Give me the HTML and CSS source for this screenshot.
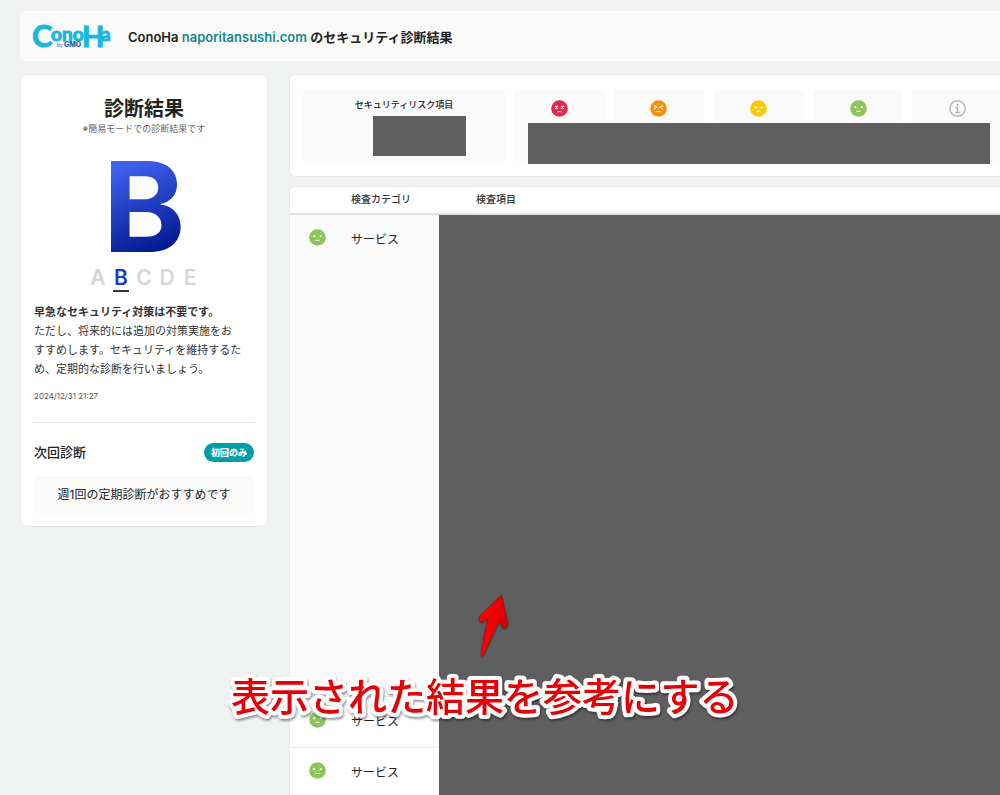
FILE: index.html
```html
<!DOCTYPE html>
<html lang="ja">
<head>
<meta charset="utf-8">
<meta name="viewport" content="width=device-width, initial-scale=1">
<title>ConoHa セキュリティ診断結果</title>
<link rel="stylesheet" href="styles.css">
</head>
<body>
<svg class="sprite" aria-hidden="true">
  <symbol id="face-good" viewBox="0 0 17 17">
    <circle cx="8.500" cy="8.500" r="8.300" fill="#8cc55a"/>
    <circle cx="5.300" cy="7.200" r="1.100" fill="#fff"/><circle cx="11.700" cy="7.200" r="1.100" fill="#fff"/>
    <path d="M6.500 11q2 1 4 0" fill="none" stroke="#fff" stroke-width="1.100"/>
  </symbol>
  <symbol id="face-mid" viewBox="0 0 17 17">
    <circle cx="8.500" cy="8.500" r="8.300" fill="#ffc800"/>
    <path d="M4 7.500h3.500M9.500 7.500H13M6.500 11.500h4" fill="none" stroke="#fff" stroke-width="1.300"/>
  </symbol>
  <symbol id="face-warn" viewBox="0 0 17 17">
    <circle cx="8.500" cy="8.500" r="8.300" fill="#ff8c0a"/>
    <path d="M4 5.500l3 1.800-3 1.800M13 5.500l-3 1.800 3 1.800M6.500 12q2-1.400 4 0" fill="none" stroke="#fff" stroke-width="1.200"/>
  </symbol>
  <symbol id="face-bad" viewBox="0 0 17 17">
    <circle cx="8.500" cy="8.500" r="8.300" fill="#e6264f"/>
    <path d="M4 5.800l3 3m0-3l-3 3M10 5.800l3 3m0-3l-3 3M6.500 12.300q2-1.600 4 0" fill="none" stroke="#fff" stroke-width="1.200"/>
  </symbol>
  <symbol id="info" viewBox="0 0 17 17">
    <circle cx="8.500" cy="8.500" r="7.700" fill="none" stroke="#b0b0b0" stroke-width="1.300"/>
    <circle cx="8.500" cy="4.800" r="1.100" fill="#b0b0b0"/>
    <path d="M6.500 7.500h2v5M6.200 12.500h4.600" fill="none" stroke="#b0b0b0" stroke-width="1.300"/>
  </symbol>
</svg>
<div class="page">
  <header class="topbar">
    <svg class="logo" viewBox="0 0 80 26" role="img" aria-label="ConoHa by GMO">
      <g class="logo-name">
        <text class="logo-tall" x="-1" y="23">C</text>
        <text class="logo-low" x="18" y="17">ono</text>
        <text class="logo-h" x="49" y="23">H</text>
        <text class="logo-low" x="68" y="17">a</text>
      </g>
      <text class="logo-by" x="24" y="23">by</text>
      <text class="logo-gmo" x="31" y="23">GMO</text>
    </svg>
    <h1 class="topbar-title">ConoHa <span class="domain">naporitansushi.com</span> のセキュリティ診断結果</h1>
  </header>
  <div class="columns">
    <aside class="card result">
      <h2 class="result-title">診断結果</h2>
      <p class="result-note">※簡易モードでの診断結果です</p>
      <div class="grade">B</div>
      <div class="scale"><span>A</span><span class="current">B</span><span>C</span><span>D</span><span>E</span></div>
      <p class="advice"><strong>早急なセキュリティ対策は不要です。</strong><br>ただし、将来的には追加の対策実施をお<br>すすめします。セキュリティを維持するた<br>め、定期的な診断を行いましょう。</p>
      <time class="date">2024/12/31 21:27</time>
      <section class="next">
        <div class="next-head"><h3 class="next-title">次回診断</h3><span class="pill">初回のみ</span></div>
        <p class="next-note">週1回の定期診断がおすすめです</p>
      </section>
    </aside>
    <main class="main">
      <section class="card summary">
        <div class="tile total"><h2 class="tile-title">セキュリティリスク項目</h2><div class="mask-total"></div></div>
        <div class="tile"><svg class="icon"><use href="#face-bad"/></svg></div>
        <div class="tile"><svg class="icon"><use href="#face-warn"/></svg></div>
        <div class="tile"><svg class="icon"><use href="#face-mid"/></svg></div>
        <div class="tile"><svg class="icon"><use href="#face-good"/></svg></div>
        <div class="tile"><svg class="icon"><use href="#info"/></svg></div>
        <div class="mask-counts"></div>
      </section>
      <section class="card list">
        <table class="checks">
          <colgroup><col class="col-icon"><col class="col-category"><col></colgroup>
          <thead><tr><th></th><th>検査カテゴリ</th><th>検査項目</th></tr></thead>
          <tbody>
            <tr class="row-open"><td class="cell-icon"><svg class="icon"><use href="#face-good"/></svg></td><td>サービス</td><td></td></tr>
            <tr><td class="cell-icon"><svg class="icon"><use href="#face-good"/></svg></td><td>サービス</td><td></td></tr>
            <tr><td class="cell-icon"><svg class="icon"><use href="#face-good"/></svg></td><td>サービス</td><td></td></tr>
          </tbody>
        </table>
        <div class="mask-items"></div>
      </section>
    </main>
  </div>
</div>
<svg class="arrow" viewBox="0 0 36 68" aria-hidden="true">
  <defs><linearGradient id="red" x1="0" y1="0.300" x2="1" y2="0.500"><stop offset="0.300" stop-color="#fb0006"/><stop offset="1" stop-color="#d00004"/></linearGradient></defs>
  <path d="M26.500 2L33 31Q33 35 29 35Q27 35 25 28L24.500 28Q16 45 8.500 62Q7 65 6 62Q8 45 13.500 25L8 29Q5 30 4 26Q3.500 23 8 20Z" fill="url(#red)" stroke="#a50005" stroke-width="0.500" stroke-linejoin="round"/>
</svg>
<svg class="caption" viewBox="0 0 520 60"><text x="6" y="43">表示された結果を参考にする</text></svg>
</body>
</html>
```
FILE: styles.css
```css
* { box-sizing: border-box; }
html, body { height: 100%; }
body {
  margin: 0;
  position: relative;
  overflow: hidden;
  background: #f0f2f1;
  color: #222;
  font-family: Inter, "Noto Sans CJK JP", sans-serif;
  font-size: 12px;
}
h1, h2, h3, p { margin: 0; }
.sprite { position: absolute; width: 0; height: 0; }
.page {
  height: 100%;
  margin-right: -17px;
  padding: 11px 0 0 20px;
  display: flex;
  flex-direction: column;
  gap: 13px;
}
.topbar {
  flex: none;
  display: flex;
  align-items: center;
  gap: 15px;
  height: 50px;
  padding: 2px 13px 0;
  background: #fafafa;
  border-radius: 4px;
}
.logo { width: 80px; height: 26px; overflow: visible; }
.logo-name { fill: #17b8db; stroke: #17b8db; stroke-width: 1; font-family: Lato, sans-serif; font-weight: 700; }
.logo-tall { font-size: 31px; }
.logo-h { font-size: 29px; }
.logo-low { font-size: 19px; }
.logo-by { fill: #1d5fae; font-size: 5px; }
.logo-gmo { fill: #1d5fae; font-size: 7px; font-weight: 800; }
.topbar-title { font-size: 13px; font-weight: 600; line-height: 20px; }
.domain { color: #13898a; }

.columns { flex: 1; min-height: 0; display: flex; align-items: flex-start; gap: 21px; }
.card { background: #fff; border: 1px solid #e6e9e8; border-radius: 6px; }
.result { flex: none; width: 248px; padding: 20px 13px 13px; }
.result-title { font-size: 20px; font-weight: 700; line-height: 29px; text-align: center; }
.result-note { font-size: 9px; line-height: 10px; text-align: center; color: #666; }
.grade {
  width: fit-content;
  margin: 18px auto 0;
  font-size: 125px;
  font-weight: 700;
  line-height: 110px;
  background: linear-gradient(160deg, #4060ee 15%, #001a90 85%);
  -webkit-background-clip: text;
  background-clip: text;
  color: transparent;
}
.scale {
  display: flex;
  justify-content: center;
  gap: 7px;
  margin-top: 4px;
  font-size: 21px;
  font-weight: 600;
  line-height: 24px;
  color: #d3d7d6;
}
.scale span { width: 16px; text-align: center; }
.scale .current { color: #1d3cc4; border-bottom: 2px solid #333; }
.advice { margin-top: 11px; font-size: 11px; line-height: 19px; color: #333; }
.advice strong { font-weight: 700; }
.date { display: block; margin-top: 11px; font-size: 8px; line-height: 12px; color: #555; }
.next { margin-top: 20px; padding-top: 20px; border-top: 1px solid #e3e6e5; }
.next-head { display: flex; align-items: center; justify-content: space-between; }
.next-title { font-size: 13px; font-weight: 500; line-height: 19px; }
.pill { padding: 0 7px; border-radius: 10px; background: #009fa5; color: #fff; font-size: 9px; font-weight: 800; line-height: 19px; }
.next-note { margin-top: 14px; background: #fafafa; border-radius: 3px; line-height: 37px; text-align: center; }

.main { flex: 1; min-width: 0; align-self: stretch; display: flex; flex-direction: column; gap: 9px; }
.summary {
  position: relative;
  flex: none;
  display: grid;
  grid-template-columns: 203fr repeat(5, 91fr);
  gap: 9px;
  padding: 14px 13px;
}
.tile { height: 73px; padding-top: 11px; background: #fafafa; border-radius: 5px; text-align: center; }
.tile-title { font-size: 9px; font-weight: 500; line-height: 9px; }
.icon { display: block; width: 17px; height: 17px; }
.tile .icon { margin: 0 auto; }
.total { position: relative; }
.mask-total { position: absolute; top: 27px; left: 70px; right: 39px; height: 40px; background: #5f5f5f; }
.mask-counts { position: absolute; top: 48px; left: 238px; right: 26px; height: 41px; background: #5f5f5f; }
.list { position: relative; flex: 1; min-height: 0; overflow: hidden; border-bottom: 0; border-radius: 6px 6px 0 0; }
.checks { width: 100%; table-layout: fixed; border-collapse: collapse; }
.col-icon { width: 61px; }
.col-category { width: 125px; }
.checks th { height: 27px; padding: 0 0 4px; border-bottom: 2px solid #dfe3e2; font-size: 10px; font-weight: 500; text-align: left; color: #333; }
.checks td { height: 51px; padding: 16px 0 0; border-bottom: 1px solid #e8eaea; vertical-align: top; line-height: 18px; }
.checks .cell-icon { padding: 14px 0 0 19px; }
.row-open td { height: 482px; background: #fafafa; }
.mask-items { position: absolute; top: 28px; left: 149px; right: 0; bottom: 0; background: #5f5f5f; }

.arrow { position: absolute; left: 475px; top: 593px; width: 36px; height: 68px; filter: drop-shadow(0 1px 1px #0006); }
.caption {
  position: absolute;
  left: 225px;
  top: 668px;
  width: 520px;
  height: 60px;
  overflow: visible;
  font-size: 39px;
  font-weight: 500;
  fill: #e60005;
  stroke: #fff;
  stroke-width: 8px;
  stroke-linejoin: round;
  paint-order: stroke fill;
  filter: drop-shadow(1px 2px 1px #0006);
}
```
